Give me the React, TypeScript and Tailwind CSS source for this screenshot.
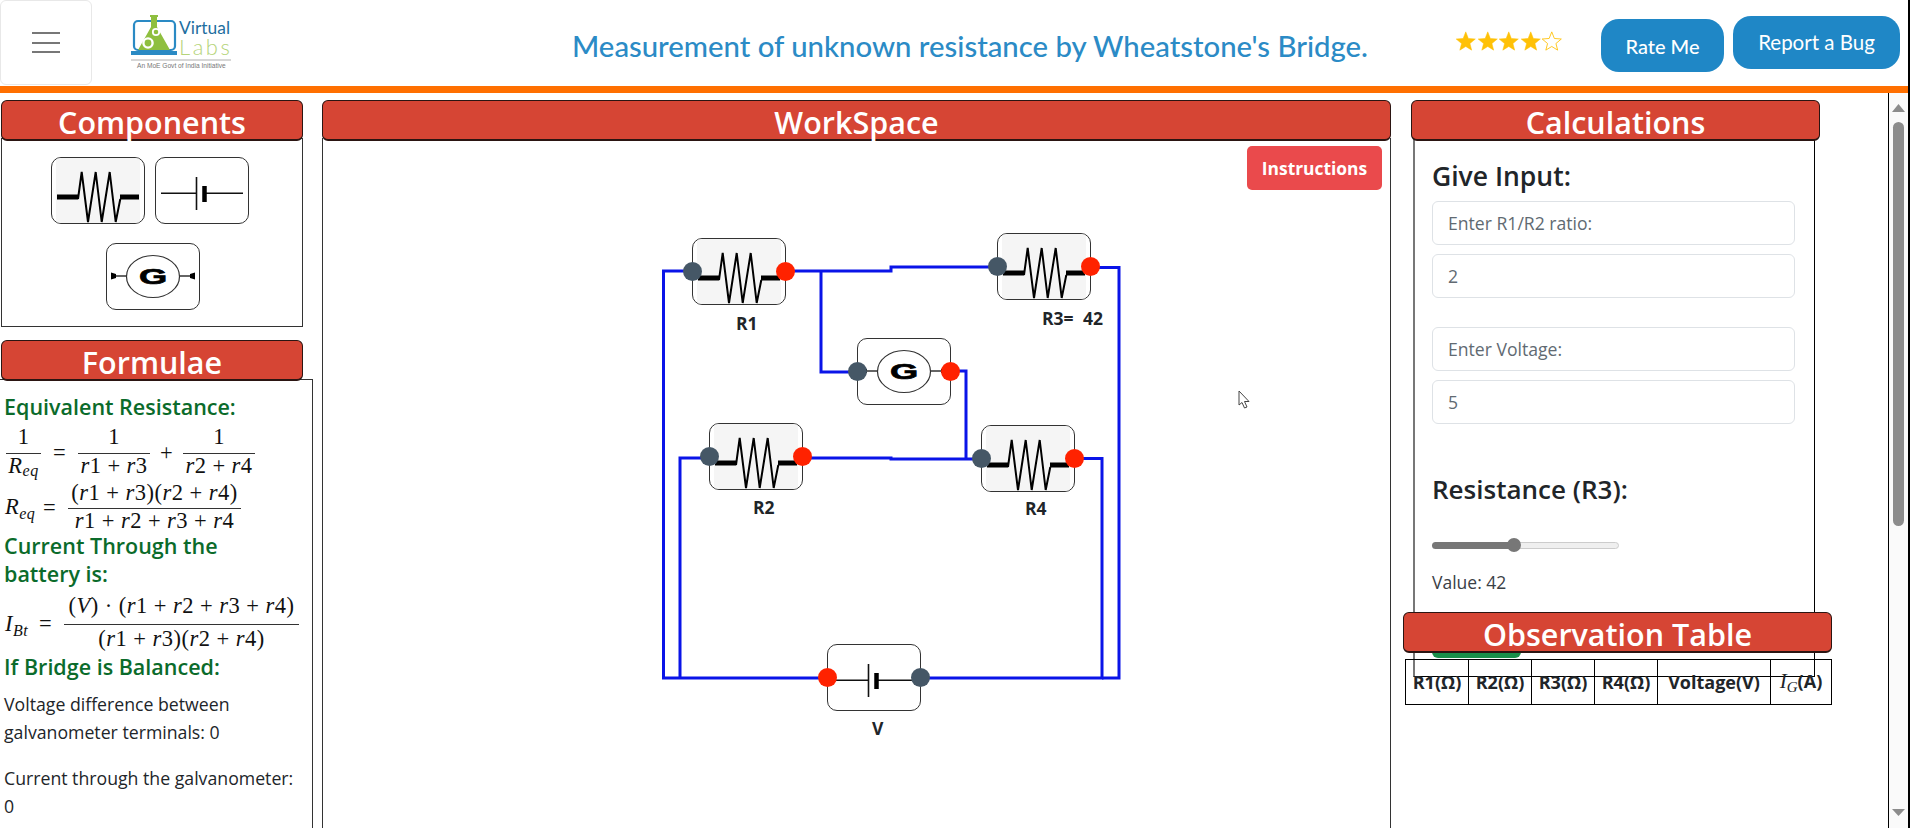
import type { ReactNode } from "react";

const raleway = "font-['Lato',sans-serif]";
const serif = "font-['Liberation_Serif',serif]";

function Resistor() {
  return (
    <svg width="92" height="65" viewBox="0 0 92 65" className="block">
      <rect x="4" y="0" width="84" height="65" fill="#f5f5f5" />
      <path d="M5 39H26M68 39H87" stroke="#000" strokeWidth="5" fill="none" />
      <path d="M26 41L29.7 14L36 64L43.7 14L49.7 64L57.7 14L63.7 64L68.3 41" stroke="#000" strokeWidth="2" fill="none" />
    </svg>
  );
}

function Battery() {
  return (
    <svg width="92" height="65" viewBox="0 0 92 65" className="block">
      <path d="M5 35.3H41M50 35.3H87" stroke="#111" strokeWidth="1.6" fill="none" />
      <path d="M40.5 19V52" stroke="#111" strokeWidth="1.6" fill="none" />
      <path d="M48.5 28V44" stroke="#000" strokeWidth="4.5" fill="none" />
    </svg>
  );
}

function Galvanometer() {
  return (
    <svg width="92" height="65" viewBox="0 0 92 65" className="block">
      <path d="M4 32H20M72 32H88" stroke="#333" strokeWidth="1.3" fill="none" />
      <path d="M4 28.5L9 30L9 34L4 35.5ZM88 28.5L83 30L83 34L88 35.5Z" fill="#000" />
      <ellipse cx="46" cy="32.5" rx="26.5" ry="21" fill="#fff" stroke="#333" strokeWidth="1.2" />
      <text
        x="0"
        y="40"
        transform="translate(32 0) scale(1.65 1)"
        fontFamily="Liberation Sans"
        fontWeight="700"
        fontSize="22"
        fill="#000"
        stroke="#000"
        strokeWidth="0.7"
      >
        G
      </text>
    </svg>
  );
}

function Tile({ children, className = "" }: { children: ReactNode; className?: string }) {
  return (
    <div className={`h-[67px] w-[94px] overflow-hidden rounded-[10px] border border-[#333] bg-white ${className}`}>
      {children}
    </div>
  );
}

function Node({
  className,
  left,
  right,
  children,
}: {
  className: string;
  left: string;
  right: string;
  children: ReactNode;
}) {
  return (
    <div className={`absolute h-[67px] w-[94px] ${className}`}>
      <Tile>{children}</Tile>
      <i className={`absolute -left-[9px] top-[24px] h-[19px] w-[19px] rounded-full ${left}`} />
      <i className={`absolute -right-[9px] top-[24px] h-[19px] w-[19px] rounded-full ${right}`} />
    </div>
  );
}

function Label({ className, children }: { className: string; children: ReactNode }) {
  return (
    <span className={`absolute whitespace-nowrap text-[17.5px] font-bold leading-[20px] text-[#212529] ${className}`}>
      {children}
    </span>
  );
}

function SectionTitle({ children, className = "" }: { children: ReactNode; className?: string }) {
  return (
    <h2
      className={`relative z-10 h-[41px] rounded-[6px] border border-b-2 border-[#2b1512] bg-[#d64534] pt-px text-center text-[30.5px] font-semibold leading-[40px] text-white ${className}`}
    >
      {children}
    </h2>
  );
}

function Frac({
  num,
  den,
  width,
  numH,
  denH,
}: {
  num: ReactNode;
  den: ReactNode;
  width: string;
  numH: string;
  denH: string;
}) {
  return (
    <span className={`flex flex-col items-center ${width}`}>
      <span className={`flex items-center whitespace-pre ${numH}`}>{num}</span>
      <span className="h-px w-full bg-[#333]" />
      <span className={`flex items-center whitespace-pre ${denH}`}>{den}</span>
    </span>
  );
}

function R({ n }: { n: number }) {
  return (
    <>
      <i>r</i>
      {n}
    </>
  );
}

function Sub({ children }: { children: ReactNode }) {
  return <span className="relative top-[5px] text-[16px] italic">{children}</span>;
}

function Plus() {
  return <span className="mx-[6px]">+</span>;
}

function Sum() {
  return (
    <>
      (<R n={1} />
      <Plus />
      <R n={3} />
      )(
      <R n={2} />
      <Plus />
      <R n={4} />)
    </>
  );
}

function SumAll() {
  return (
    <>
      <R n={1} />
      <Plus />
      <R n={2} />
      <Plus />
      <R n={3} />
      <Plus />
      <R n={4} />
    </>
  );
}

function Formulae() {
  return (
    <div className="-mt-[2px] flex-1 border-r border-t border-[#333] pl-[4px] pt-[13px]">
      <h3 className="whitespace-nowrap text-[21.5px] font-semibold leading-[28px] text-[#0b6b2b]">Equivalent Resistance:</h3>
      <div className={`flex h-[57px] items-start pl-[2px] text-[22.5px] tracking-[0.5px] text-[#111] ${serif}`}>
        <Frac
          width="w-[35px]"
          numH="h-[32px]"
          denH="h-[24px]"
          num="1"
          den={
            <>
              <i>R</i>
              <Sub>eq</Sub>
            </>
          }
        />
        <span className="ml-[12px] w-[25px] leading-[64px]">=</span>
        <Frac
          width="w-[72px]"
          numH="h-[32px]"
          denH="h-[24px]"
          num="1"
          den={
            <>
              <R n={1} />
              <Plus />
              <R n={3} />
            </>
          }
        />
        <span className="w-[33px] text-center leading-[64px]">+</span>
        <Frac
          width="w-[72px]"
          numH="h-[32px]"
          denH="h-[24px]"
          num="1"
          den={
            <>
              <R n={2} />
              <Plus />
              <R n={4} />
            </>
          }
        />
      </div>
      <div className={`flex h-[54px] items-start pl-px text-[22.5px] tracking-[0.5px] text-[#111] ${serif}`}>
        <span className="w-[38px] leading-[58px]">
          <i>R</i>
          <Sub>eq</Sub>
        </span>
        <span className="w-[25px] leading-[60px]">=</span>
        <Frac width="w-[173px]" numH="h-[30px]" denH="h-[24px]" num={<Sum />} den={<SumAll />} />
      </div>
      <h3 className="w-[240px] text-[21.5px] font-semibold leading-[28px] text-[#0b6b2b]">
        Current Through the battery is:
      </h3>
      <div className={`flex h-[65px] items-start pl-px text-[22.5px] tracking-[0.5px] text-[#111] ${serif}`}>
        <span className="w-[34px] leading-[72px]">
          <i>I</i>
          <Sub>Bt</Sub>
        </span>
        <span className="w-[25px] leading-[72px]">=</span>
        <Frac
          width="w-[235px]"
          numH="h-[36px]"
          denH="h-[28px]"
          num={
            <>
              (<i>V</i>)<span className="mx-[6px]">·</span>(<SumAll />)
            </>
          }
          den={<Sum />}
        />
      </div>
      <h3 className="text-[21.5px] font-semibold leading-[28px] text-[#0b6b2b]">If Bridge is Balanced:</h3>
      <p className="mt-[9px] text-[17.7px] leading-[28px] text-[#212529]">
        Voltage difference between
        <br />
        galvanometer terminals: 0
      </p>
      <p className="mt-[18px] whitespace-nowrap text-[17.7px] leading-[28px] text-[#212529]">
        Current through the galvanometer:
        <br />0
      </p>
    </div>
  );
}

function Circuit() {
  return (
    <div className="relative mt-px flex-1">
      <svg width="1066" height="689" viewBox="323 139 1066 689" className="absolute left-0 top-0" fill="none">
        <g stroke="#0a14e8" strokeWidth="3">
          <path d="M692 271H663.5V678H827" />
          <path d="M708 458H680V678" />
          <path d="M785 271H891V267H997" />
          <path d="M821 271V372H857" />
          <path d="M949 371H966V458" />
          <path d="M802 458H891V459H980" />
          <path d="M1074 458.5H1102V678H920" />
          <path d="M1091 267.5H1119V678H1102" />
        </g>
      </svg>

      <button className="absolute right-[8px] top-[7px] h-[44px] w-[135px] rounded-[5px] bg-[#ea4a4c] text-[17.4px] font-bold text-white">
        Instructions
      </button>

      <Node className="left-[369px] top-[99px]" left="bg-[#455766]" right="bg-[#ff2200]">
        <Resistor />
      </Node>
      <Node className="left-[674px] top-[94px]" left="bg-[#455766]" right="bg-[#ff2200]">
        <Resistor />
      </Node>
      <Node className="left-[534px] top-[199px]" left="bg-[#455766]" right="bg-[#ff2200]">
        <Galvanometer />
      </Node>
      <Node className="left-[386px] top-[284px]" left="bg-[#455766]" right="bg-[#ff2200]">
        <Resistor />
      </Node>
      <Node className="left-[658px] top-[286px]" left="bg-[#455766]" right="bg-[#ff2200]">
        <Resistor />
      </Node>
      <Node className="left-[504px] top-[505px]" left="bg-[#ff2200]" right="bg-[#455766]">
        <Battery />
      </Node>

      <Label className="left-[413px] top-[174px]">R1</Label>
      <Label className="left-[719px] top-[169px] [word-spacing:5px]">R3= 42</Label>
      <Label className="left-[430px] top-[358px]">R2</Label>
      <Label className="left-[702px] top-[359px]">R4</Label>
      <Label className="left-[549px] top-[579px]">V</Label>

      <svg width="12" height="20" viewBox="0 0 12 20" className="absolute left-[915px] top-[251px]">
        <path d="M1 1V15L4 12.5L6.5 18L9 17L6.5 11.5H11Z" fill="#fff" stroke="#444" strokeWidth="1" />
      </svg>
    </div>
  );
}

function Field({ value }: { value: string }) {
  return (
    <input
      readOnly
      value={value}
      className="block h-[44px] w-[363px] rounded-[6px] border border-[#dee2e6] bg-white px-[15px] text-[17.6px] text-[#616a72] outline-none"
    />
  );
}

function Calculations() {
  return (
    <div className="ml-[10px] -mt-[3px] h-[539px] w-[402px] border border-l-2 border-black border-l-[#777] pl-[17px] pt-[19px]">
      <h3 className="text-[26.5px] font-semibold leading-[36px] text-[#212529]">Give Input:</h3>
      <div className="mt-[7px] flex flex-col gap-[9px]">
        <Field value="Enter R1/R2 ratio:" />
        <Field value="2" />
      </div>
      <div className="mt-[29px] flex flex-col gap-[9px]">
        <Field value="Enter Voltage:" />
        <Field value="5" />
      </div>
      <h3 className="mt-[47px] text-[26px] font-semibold leading-[36px] text-[#212529]">Resistance (R3):</h3>
      <div className="mt-[31px] flex h-[14px] w-[187px] items-center">
        <div className="h-[7px] w-[82px] rounded-l-full bg-[#777]" />
        <div className="-mx-[7px] z-10 h-[14px] w-[14px] shrink-0 rounded-full bg-[#777]" />
        <div className="h-[7px] flex-1 rounded-r-full border border-[#ccc] bg-[#efefef]" />
      </div>
      <p className="mt-[18px] text-[17.5px] leading-[24px] text-[#3a4046]">Value: 42</p>
      <div className="mt-[26px] h-[38px] w-[89px] rounded-[6px] bg-[#198f4a]" />
    </div>
  );
}

function ObservationTable() {
  const cell = "border border-black p-0 text-center text-[18px] font-bold whitespace-nowrap text-[#212529]";
  return (
    <table className="ml-[2px] mt-[6px] h-[46px] w-[427px] table-fixed border-collapse">
      <thead>
        <tr>
          <th className={`${cell} w-[63px]`}>R1(Ω)</th>
          <th className={`${cell} w-[63px]`}>R2(Ω)</th>
          <th className={`${cell} w-[63px]`}>R3(Ω)</th>
          <th className={`${cell} w-[63px]`}>R4(Ω)</th>
          <th className={`${cell} w-[113px]`}>Voltage(V)</th>
          <th className={cell}>
            <span className={`text-[21px] font-normal italic ${serif}`}>
              I<span className="relative top-[4px] text-[15px]">G</span>
            </span>
            (A)
          </th>
        </tr>
      </thead>
    </table>
  );
}

function Star({ filled }: { filled: boolean }) {
  return (
    <svg width="21.5" height="20" viewBox="0 0 24 23" className="block">
      <path
        d="M12 1L15 8.6L23 9.2L16.8 14.4L18.8 22L12 17.8L5.2 22L7.2 14.4L1 9.2L9 8.6Z"
        fill={filled ? "#ffc107" : "#fff"}
        stroke="#ffc107"
        strokeWidth={filled ? 0.6 : 1}
      />
    </svg>
  );
}

function Logo() {
  return (
    <svg width="101" height="56" viewBox="0 0 101 56" className="ml-[39px] mt-[14px] shrink-0">
      <rect x="3" y="7" width="41" height="29" rx="4" fill="none" stroke="#2a8ac4" strokeWidth="2.2" />
      <path d="M0 37H46V41H0Z" fill="#2a8ac4" />
      <path d="M19 1H27V3H26V13L39 36H7L20 13V3H19Z" fill="#8fbf3f" />
      <circle cx="17" cy="29" r="4.6" fill="none" stroke="#fff" strokeWidth="2.4" />
      <circle cx="25" cy="18" r="3.2" fill="none" stroke="#fff" strokeWidth="1.8" />
      <text x="48" y="20" fontFamily="Lato" fontSize="18" textLength="51" lengthAdjust="spacingAndGlyphs" fill="#1f6f9f">
        Virtual
      </text>
      <text x="48" y="41" fontFamily="Lato" fontWeight="300" fontSize="22" letterSpacing="2.5" fill="#b5d47a">
        Labs
      </text>
      <path d="M0 46H100" stroke="#999" strokeWidth="0.8" />
      <text x="6" y="54" fontFamily="Liberation Sans" fontSize="6.6" fill="#777">
        An MoE Govt of India Initiative
      </text>
    </svg>
  );
}

export default function App() {
  return (
    <div className="flex h-screen w-full flex-col overflow-hidden border-r-2 border-black bg-white font-['Open_Sans',sans-serif]">
      <header className="flex h-[86px] shrink-0 items-start">
        <button className="flex h-[85px] w-[92px] shrink-0 flex-col items-center justify-center gap-[7.5px] rounded-[6px] border border-[#e8e8e8]">
          <i className="h-[2px] w-[28px] bg-[#777]" />
          <i className="h-[2px] w-[28px] bg-[#777]" />
          <i className="h-[2px] w-[28px] bg-[#777]" />
        </button>
        <Logo />
        <h1 className={`ml-[340px] mt-[27px] w-[796px] shrink-0 whitespace-nowrap text-[29.3px] font-medium leading-[38px] text-[#2b8bc6] ${raleway}`}>
          Measurement of unknown resistance by Wheatstone's Bridge.
        </h1>
        <div className="ml-[87px] mt-[31px] flex w-[146px] shrink-0">
          <Star filled />
          <Star filled />
          <Star filled />
          <Star filled />
          <Star filled={false} />
        </div>
        <button className={`mt-[19px] h-[53px] w-[123px] shrink-0 rounded-[18px] bg-[#1f87c6] text-[20px] font-medium text-white ${raleway}`}>
          Rate Me
        </button>
        <button className={`ml-[9px] mt-[16px] h-[53px] w-[167px] shrink-0 rounded-[18px] bg-[#1f87c6] text-[20.5px] text-white ${raleway}`}>
          Report a Bug
        </button>
      </header>
      <div className="h-[7px] shrink-0 bg-[#ff6f00]" />

      <main className="flex min-h-0 flex-1">
        <section className="flex w-[313px] shrink-0 flex-col pt-[7px]">
          <SectionTitle className="ml-px w-[302px]">Components</SectionTitle>
          <div className="ml-px -mt-[3px] h-[189px] w-[302px] border border-[#333] pt-[18px]">
            <div className="ml-[49px] flex gap-[10px]">
              <Tile>
                <Resistor />
              </Tile>
              <Tile>
                <Battery />
              </Tile>
            </div>
            <Tile className="ml-[104px] mt-[19px]">
              <Galvanometer />
            </Tile>
          </div>
          <SectionTitle className="ml-px mt-[13px] w-[302px]">Formulae</SectionTitle>
          <Formulae />
        </section>

        <section className="ml-[9px] flex w-[1069px] shrink-0 flex-col pt-[7px]">
          <SectionTitle>WorkSpace</SectionTitle>
          <div className="-mt-[3px] flex flex-1 border-x border-[#333]">
            <Circuit />
          </div>
        </section>

        <section className="ml-[12px] w-[429px] shrink-0 pt-[7px]">
          <SectionTitle className="ml-[8px] mr-[12px]">Calculations</SectionTitle>
          <Calculations />
          <div className="relative z-10 -mt-[65px]">
            <SectionTitle>Observation Table</SectionTitle>
            <ObservationTable />
          </div>
        </section>

        <aside className="ml-auto flex w-[20px] shrink-0 flex-col items-center border-l border-black bg-[#fafafa] pb-[12px] pt-[11px]">
          <svg width="13" height="8" viewBox="0 0 13 8" className="block">
            <path d="M6.5 0L13 8H0Z" fill="#8c8c8c" />
          </svg>
          <div className="mt-[10px] h-[404px] w-[11px] rounded-full bg-[#8c8c8c]" />
          <svg width="13" height="7" viewBox="0 0 13 7" className="mt-auto block">
            <path d="M0 0H13L6.5 7Z" fill="#8c8c8c" />
          </svg>
        </aside>
      </main>
    </div>
  );
}
